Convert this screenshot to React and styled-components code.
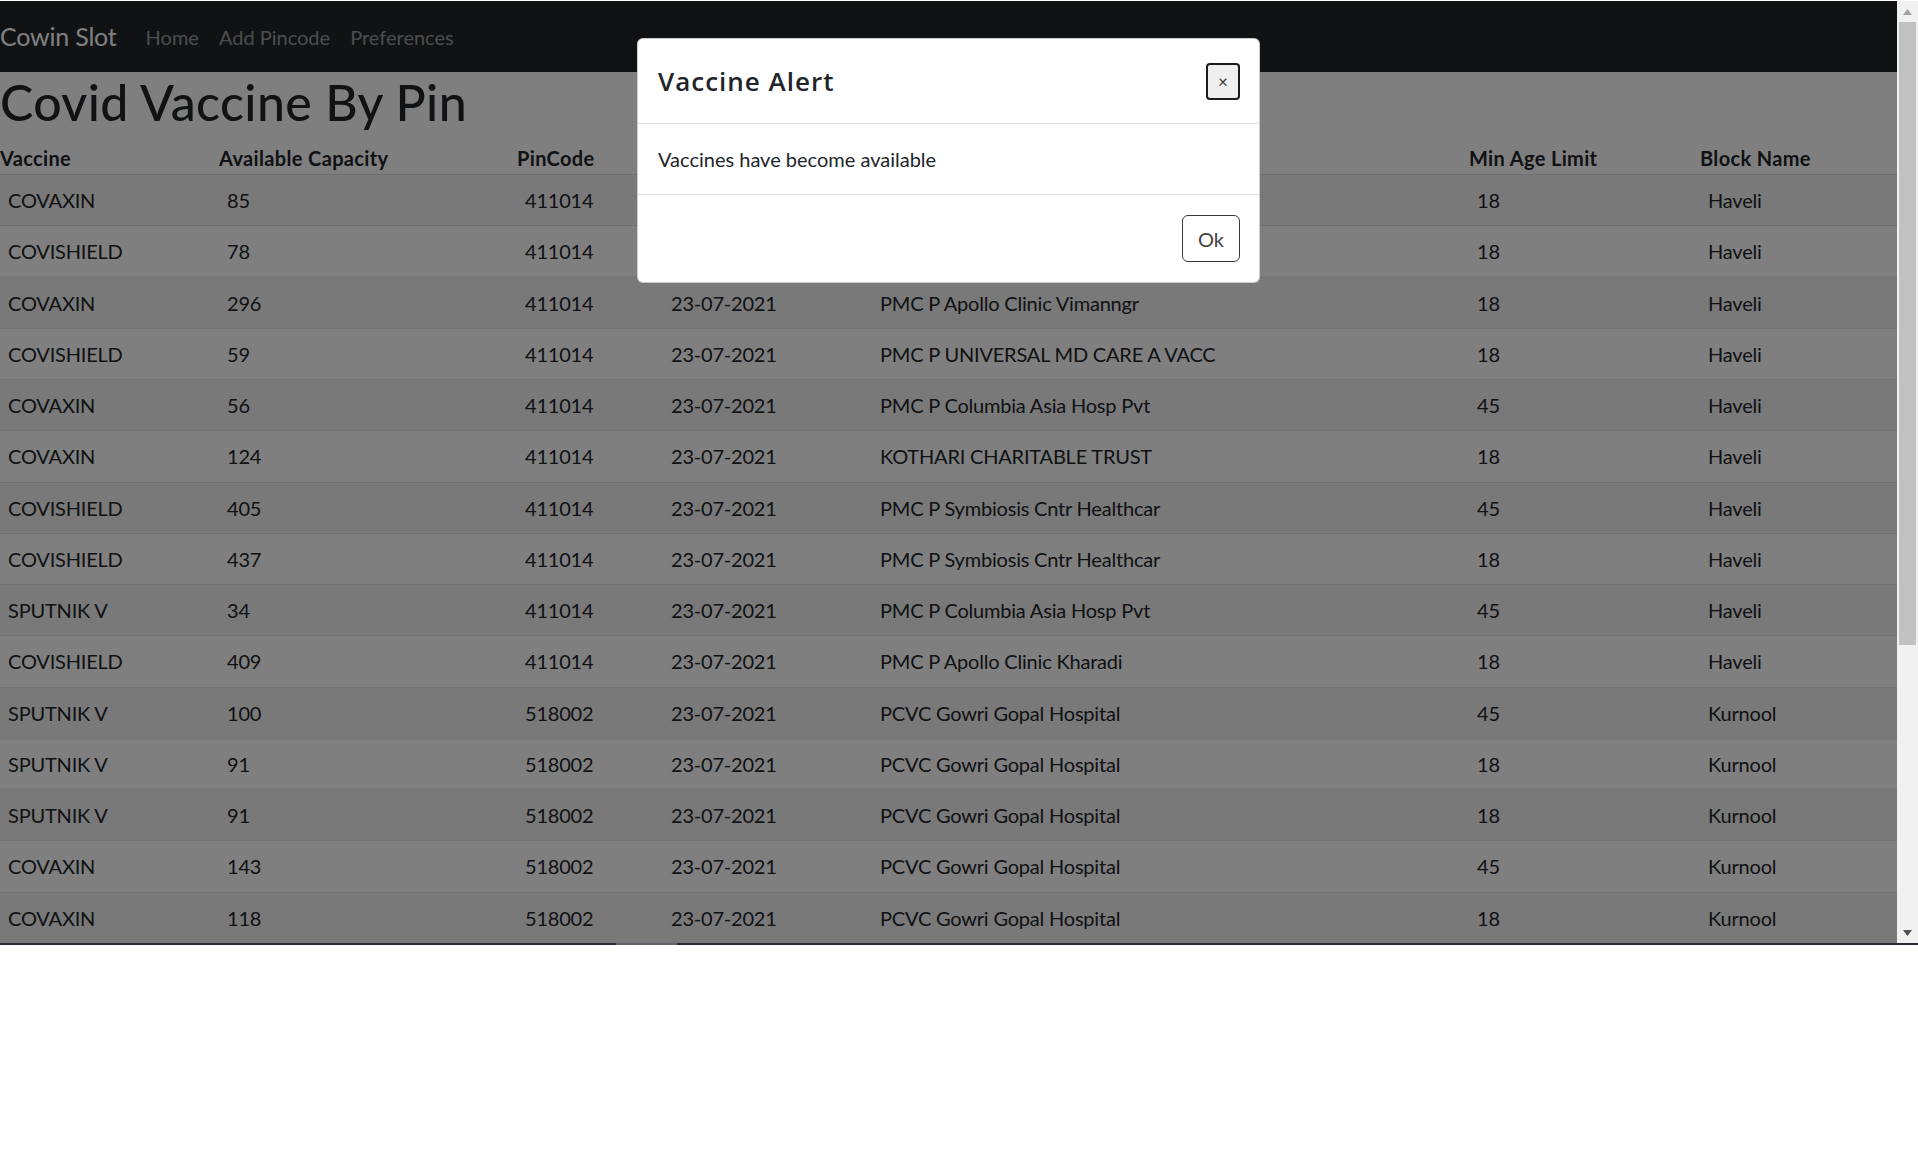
import React from 'react';
import styled, { createGlobalStyle } from 'styled-components';

const GlobalStyle = createGlobalStyle`
  html, body {
    margin: 0;
    padding: 0;
    background: #fff;
  }
  body {
    font-family: Lato, "Open Sans", sans-serif;
    color: #212529;
  }
  * {
    box-sizing: border-box;
  }
`;

const headers = ['Vaccine', 'Available Capacity', 'PinCode', 'Date', 'Center Name', 'Min Age Limit', 'Block Name'];

const slots = [
  ['COVAXIN', '85', '411014', '23-07-2021', 'PMC P Apollo Clinic Kharadi', '18', 'Haveli'],
  ['COVISHIELD', '78', '411014', '23-07-2021', 'PMC P Columbia Asia Hosp Pvt', '18', 'Haveli'],
  ['COVAXIN', '296', '411014', '23-07-2021', 'PMC P Apollo Clinic Vimanngr', '18', 'Haveli'],
  ['COVISHIELD', '59', '411014', '23-07-2021', 'PMC P UNIVERSAL MD CARE A VACC', '18', 'Haveli'],
  ['COVAXIN', '56', '411014', '23-07-2021', 'PMC P Columbia Asia Hosp Pvt', '45', 'Haveli'],
  ['COVAXIN', '124', '411014', '23-07-2021', 'KOTHARI CHARITABLE TRUST', '18', 'Haveli'],
  ['COVISHIELD', '405', '411014', '23-07-2021', 'PMC P Symbiosis Cntr Healthcar', '45', 'Haveli'],
  ['COVISHIELD', '437', '411014', '23-07-2021', 'PMC P Symbiosis Cntr Healthcar', '18', 'Haveli'],
  ['SPUTNIK V', '34', '411014', '23-07-2021', 'PMC P Columbia Asia Hosp Pvt', '45', 'Haveli'],
  ['COVISHIELD', '409', '411014', '23-07-2021', 'PMC P Apollo Clinic Kharadi', '18', 'Haveli'],
  ['SPUTNIK V', '100', '518002', '23-07-2021', 'PCVC Gowri Gopal Hospital', '45', 'Kurnool'],
  ['SPUTNIK V', '91', '518002', '23-07-2021', 'PCVC Gowri Gopal Hospital', '18', 'Kurnool'],
  ['SPUTNIK V', '91', '518002', '23-07-2021', 'PCVC Gowri Gopal Hospital', '18', 'Kurnool'],
  ['COVAXIN', '143', '518002', '23-07-2021', 'PCVC Gowri Gopal Hospital', '45', 'Kurnool'],
  ['COVAXIN', '118', '518002', '23-07-2021', 'PCVC Gowri Gopal Hospital', '18', 'Kurnool'],
];

const App = () => {
  return (
    <>
      <GlobalStyle />
      <Screen>
        <Viewport>
          <Page>
            <Navbar>
              <Brand>Cowin Slot</Brand>
              <NavLink>Home</NavLink>
              <NavLink>Add Pincode</NavLink>
              <NavLink>Preferences</NavLink>
            </Navbar>
            <Title>Covid Vaccine By Pin</Title>
            <Table>
              <HeadRow>
                {headers.map((h) => (
                  <HeadCell key={h}>{h}</HeadCell>
                ))}
              </HeadRow>
              {slots.map((row, i) => (
                <Row key={i} $striped={i % 2 === 0}>
                  {row.map((value, j) => (
                    <Cell key={j}>{value}</Cell>
                  ))}
                </Row>
              ))}
            </Table>

            <Backdrop>
              <Dialog>
                <DialogHeader>
                  <DialogTitle>Vaccine Alert</DialogTitle>
                  <CloseButton>×</CloseButton>
                </DialogHeader>
                <DialogBody>Vaccines have become available</DialogBody>
                <DialogFooter>
                  <OkButton>Ok</OkButton>
                </DialogFooter>
              </Dialog>
            </Backdrop>
          </Page>

          <Scrollbar>
            <ScrollArrow>
              <svg width="9" height="6" viewBox="0 0 9 6">
                <polygon points="4.5,0 9,6 0,6" fill="#a3a3a3" />
              </svg>
            </ScrollArrow>
            <ScrollTrack>
              <ScrollThumb />
            </ScrollTrack>
            <ScrollArrow>
              <svg width="9" height="6" viewBox="0 0 9 6">
                <polygon points="0,0 9,0 4.5,6" fill="#505050" />
              </svg>
            </ScrollArrow>
          </Scrollbar>
        </Viewport>
        <TaskStrip>
          <TaskSegment />
        </TaskStrip>
      </Screen>
    </>
  );
};

const Screen = styled.div`
  width: 1918px;
  height: 1152px;
  padding-top: 1px;
  background: #fff;
  overflow: hidden;
`;

const Viewport = styled.div`
  display: flex;
  height: 942px;
`;

const Page = styled.div`
  position: relative;
  flex: 1;
  overflow: hidden;
  background: #fff;
`;

const Navbar = styled.nav`
  display: flex;
  align-items: center;
  height: 71px;
  background: #212529;
`;

const Brand = styled.a`
  margin-right: 19px;
  font-size: 25px;
  line-height: 37.5px;
  letter-spacing: -0.2px;
  color: #fff;
`;

const NavLink = styled.a`
  padding: 0 10px;
  font-size: 20px;
  line-height: 30px;
  color: rgba(255, 255, 255, 0.55);
`;

const Title = styled.h1`
  margin: 0 0 10px;
  font-size: 50px;
  font-weight: 500;
  line-height: 60px;
  letter-spacing: 0.4px;
  color: #212529;
`;

const Table = styled.div`
  width: 100%;
  font-size: 20px;
  line-height: 30px;
`;

const gridColumns = '219px 298px 146px 209px 597px 231px 1fr';

const HeadRow = styled.div`
  display: grid;
  grid-template-columns: ${gridColumns};
  align-items: center;
  height: 33px;
  border-bottom: 1px solid #dee2e6;
`;

const HeadCell = styled.div`
  font-weight: 700;
  letter-spacing: 0.35px;
  color: #212529;
  white-space: nowrap;
`;

const Row = styled.div`
  display: grid;
  grid-template-columns: ${gridColumns};
  align-items: center;
  height: 51.25px;
  border-bottom: 1px solid #dee2e6;
  background: ${(p) => (p.$striped ? '#f2f2f2' : '#fff')};
`;

const Cell = styled.div`
  padding-left: 8px;
  letter-spacing: -0.2px;
  color: #212529;
  white-space: nowrap;
`;

const Backdrop = styled.div`
  position: absolute;
  inset: 0;
  display: flex;
  justify-content: center;
  align-items: flex-start;
  padding-top: 37px;
  background: rgba(0, 0, 0, 0.5);
`;

const Dialog = styled.div`
  width: 623px;
  background: #fff;
  border: 1px solid rgba(0, 0, 0, 0.2);
  border-radius: 6px;
`;

const DialogHeader = styled.div`
  display: flex;
  justify-content: space-between;
  align-items: center;
  height: 85px;
  padding: 0 19px 0 20px;
  border-bottom: 1px solid #dee2e6;
`;

const DialogTitle = styled.h5`
  margin: 0;
  font-family: "Open Sans", Lato, sans-serif;
  font-size: 26px;
  font-weight: 600;
  line-height: 38px;
  letter-spacing: 1px;
  color: #212529;
`;

const CloseButton = styled.button`
  width: 34px;
  height: 37px;
  padding: 0;
  border: 2px solid #1b1b1b;
  border-radius: 4px;
  background: #efefef;
  font-family: Lato, sans-serif;
  font-size: 17px;
  color: #333;
`;

const DialogBody = styled.div`
  padding: 20px;
  font-size: 20px;
  line-height: 30px;
  color: #212529;
  border-bottom: 1px solid #dee2e6;
`;

const DialogFooter = styled.div`
  display: flex;
  justify-content: flex-end;
  padding: 15px 14px 15px 15px;
`;

const OkButton = styled.button`
  width: 58px;
  height: 47px;
  margin: 5px;
  padding: 0;
  border: 1px solid #3a3a3a;
  border-radius: 6px;
  background: #fff;
  font-family: Lato, sans-serif;
  font-size: 20px;
  color: #444;
`;

const Scrollbar = styled.div`
  display: flex;
  flex-direction: column;
  width: 21px;
  background: #f1f1f1;
`;

const ScrollArrow = styled.div`
  display: flex;
  justify-content: center;
  align-items: center;
  height: 21px;
`;

const ScrollTrack = styled.div`
  flex: 1;
  padding: 0 2px;
`;

const ScrollThumb = styled.div`
  height: 623px;
  background: #c1c1c1;
`;

const TaskStrip = styled.div`
  display: flex;
  height: 2px;
  padding-left: 616px;
  background: #272c32;
`;

const TaskSegment = styled.div`
  width: 61px;
  background: #5e6369;
`;

export default App;
